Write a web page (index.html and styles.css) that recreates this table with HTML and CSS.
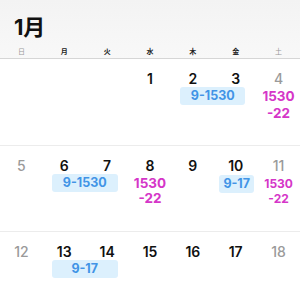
FILE: index.html
```html
<!DOCTYPE html>
<html lang="ja">
<head>
<meta charset="utf-8">
<link rel="stylesheet" href="styles.css">
</head>
<body>
<div class="cal">
  <header class="head">
    <h1 class="month">1月</h1>
    <div class="dow">
      <span class="wk-off">日</span><span>月</span><span>火</span><span>水</span><span>木</span><span>金</span><span class="wk-off">土</span>
    </div>
  </header>

  <section class="week week-first">
    <div class="num c4">1</div>
    <div class="num c5">2</div>
    <div class="num c6">3</div>
    <div class="num c7 off">4</div>
    <div class="pill span-56">9-1530</div>
    <div class="note c7 tall">1530<br>-22</div>
  </section>

  <section class="week">
    <div class="num c1 off">5</div>
    <div class="num c2">6</div>
    <div class="num c3">7</div>
    <div class="num c4">8</div>
    <div class="num c5">9</div>
    <div class="num c6">10</div>
    <div class="num c7 off">11</div>
    <div class="pill span-23">9-1530</div>
    <div class="note c4">1530<br>-22</div>
    <div class="pill single c6">9-17</div>
    <div class="note c7 small">1530<br>-22</div>
  </section>

  <section class="week week-last">
    <div class="num c1 off">12</div>
    <div class="num c2">13</div>
    <div class="num c3">14</div>
    <div class="num c4">15</div>
    <div class="num c5">16</div>
    <div class="num c6">17</div>
    <div class="num c7 off">18</div>
    <div class="pill span-23">9-17</div>
  </section>
</div>
</body>
</html>
```

FILE: styles.css
```css
html, body {
  margin: 0;
  padding: 0;
  background: #ffffff;
}
body {
  width: 300px;
  height: 300px;
  overflow: hidden;
  font-family: Inter, "Noto Sans CJK JP", "Noto Sans", sans-serif;
  color: #111;
}
.cal {
  width: 300px;
}
.head {
  background: linear-gradient(#f3f3f3, #f8f8f8);
  border-bottom: 1px solid #d6d6d6;
  height: 59px;
  box-sizing: border-box;
  padding-top: 13px;
}
.month {
  margin: 0 0 0 14px;
  font-size: 22px;
  line-height: 28px;
  font-weight: 700;
  letter-spacing: -0.3px;
}
.dow {
  display: grid;
  grid-template-columns: repeat(7, 1fr);
  margin-top: 6px;
  font-size: 7px;
  line-height: 9px;
  font-weight: 600;
  text-align: center;
  color: #222;
}
.dow .wk-off {
  color: #999;
  font-weight: 400;
}
.week {
  display: grid;
  grid-template-columns: repeat(7, 1fr);
  grid-template-rows: 28px auto;
  align-content: start;
  height: 86px;
  box-sizing: border-box;
  border-top: 1px solid #ececec;
}
.week-first {
  border-top: none;
}
.week-last {
  height: 69px;
}
.num {
  grid-row: 1;
  text-align: center;
  font-size: 14px;
  line-height: 14px;
  padding-top: 13px;
  font-weight: 600;
  color: #111;
}
.num.off {
  color: #9a9a9a;
  font-weight: 500;
}
.c1 { grid-column: 1; }
.c2 { grid-column: 2; }
.c3 { grid-column: 3; }
.c4 { grid-column: 4; }
.c5 { grid-column: 5; }
.c6 { grid-column: 6; }
.c7 { grid-column: 7; }
.pill {
  grid-row: 2;
  align-self: start;
  height: 18px;
  line-height: 18px;
  border-radius: 3px;
  background: #dcf0fd;
  color: #4194e6;
  font-size: 12.5px;
  font-weight: 700;
  text-align: center;
}
.span-56 {
  grid-column: 5 / 7;
  margin: 0 12px 0 9px;
}
.span-23 {
  grid-column: 2 / 4;
  margin: 0 11px 0 9px;
}
.pill.single {
  margin: 1px 3px 0 5px;
}
.note {
  grid-row: 2;
  text-align: center;
  color: #d536c8;
  font-size: 13.5px;
  line-height: 15px;
  font-weight: 700;
  padding-top: 2px;
}
.note.tall {
  line-height: 17px;
  padding-top: 1px;
}
.note.small {
  font-size: 12px;
  line-height: 15px;
  padding-top: 2px;
}
```
